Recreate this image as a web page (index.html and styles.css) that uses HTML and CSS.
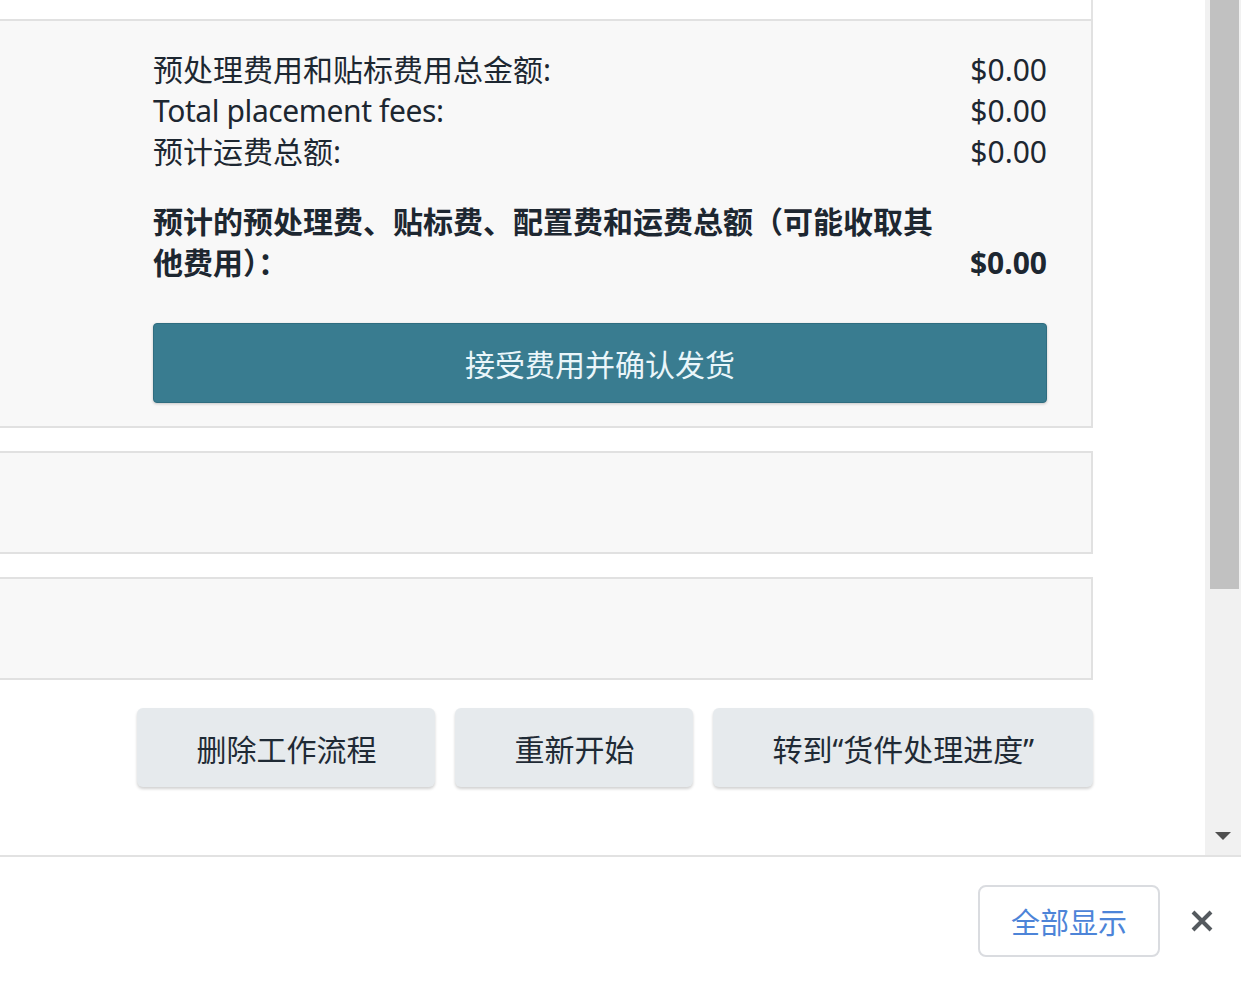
FILE: index.html
```html
<!DOCTYPE html>
<html lang="zh-CN">
<head>
	<meta charset="UTF-8">
	<meta name="viewport" content="width=device-width, initial-scale=1.0">
	<title>确认发货</title>
	<link rel="stylesheet" href="styles.css">
</head>
<body>
	<div class="window">
		<div class="viewport">
			<div class="page">
				<div class="top-strip"></div>

				<div class="panel fees">
					<div class="fee-row">
						<span class="fee-label">预处理费用和贴标费用总金额:</span>
						<span class="fee-value">$0.00</span>
					</div>
					<div class="fee-row">
						<span class="fee-label latin">Total placement fees:</span>
						<span class="fee-value">$0.00</span>
					</div>
					<div class="fee-row">
						<span class="fee-label">预计运费总额:</span>
						<span class="fee-value">$0.00</span>
					</div>
					<div class="fee-row total">
						<span class="fee-label">预计的预处理费、贴标费、配置费和运费总额（可能收取其他费用）：</span>
						<span class="fee-value">$0.00</span>
					</div>
					<button class="btn-primary" type="button">接受费用并确认发货</button>
				</div>

				<div class="panel empty"></div>
				<div class="panel empty"></div>

				<div class="actions">
					<button class="btn-secondary" type="button">删除工作流程</button>
					<button class="btn-secondary" type="button">重新开始</button>
					<button class="btn-secondary" type="button">转到“货件处理进度”</button>
				</div>
			</div>

			<div class="scrollbar">
				<div class="scroll-thumb"></div>
				<div class="scroll-arrow"></div>
			</div>
		</div>

		<div class="shelf">
			<button class="btn-show-all" type="button">全部显示</button>
			<button class="btn-close" type="button" aria-label="关闭">
				<svg width="24" height="24" viewBox="0 0 24 24">
					<path d="M3 3 L21 21 M21 3 L3 21" stroke="#555a5f" stroke-width="4" fill="none"/>
				</svg>
			</button>
		</div>
	</div>
</body>
</html>
```

FILE: styles.css
```css
body
{
	margin: 0;
	font-family: "Noto Sans", "Noto Sans CJK SC", sans-serif;
	color: #1d2731;
	background-color: #ffffff;
	overflow: hidden;
}

.window
{
	display: flex;
	flex-direction: column;
	width: 1241px;
	height: 985px;
}

.viewport
{
	display: flex;
	height: 857px;
	border-bottom: 2px solid #e2e2e2;
	box-sizing: border-box;
}

.page
{
	flex: 1;
	padding-right: 112px;
	overflow: hidden;
}

.top-strip
{
	height: 19px;
	border-right: 2px solid #e3e3e3;
}

.panel
{
	background-color: #f8f8f8;
	border: 2px solid #e1e1e1;
	border-left: 0;
}

.fees
{
	padding: 28px 44px 23px 153px;
}

.fee-row
{
	display: flex;
	justify-content: space-between;
	align-items: flex-end;
	font-size: 30px;
	line-height: 41px;
}

.fee-label
{
	width: 790px;
}

.fee-label.latin
{
	letter-spacing: -0.4px;
}

.fee-row.total
{
	margin-top: 29px;
	font-weight: 700;
}

.btn-primary
{
	display: block;
	width: 100%;
	height: 80px;
	margin-top: 40px;
	font-family: "Noto Sans", "Noto Sans CJK SC", sans-serif;
	font-size: 30px;
	color: #eaf6fa;
	background-color: #397c90;
	border: 1px solid #2f6d80;
	border-radius: 4px;
	box-shadow: 0 1px 3px rgba(0, 0, 0, 0.2);
	cursor: pointer;
}

.empty
{
	height: 99px;
	margin-top: 23px;
}

.actions
{
	display: flex;
	justify-content: flex-end;
	gap: 20px;
	margin-top: 28px;
}

.btn-secondary
{
	height: 79px;
	padding: 0 59px;
	font-family: "Noto Sans", "Noto Sans CJK SC", sans-serif;
	font-size: 30px;
	color: #1f2a35;
	background-color: #e6eaed;
	border: 0;
	border-radius: 6px;
	box-shadow: 0 2px 3px rgba(0, 0, 0, 0.18);
	cursor: pointer;
}

.scrollbar
{
	display: flex;
	flex-direction: column;
	align-items: center;
	width: 36px;
	background-color: #f1f1f1;
}

.scroll-thumb
{
	width: 29px;
	height: 589px;
	margin-left: 2px;
	background-color: #c1c1c1;
}

.scroll-arrow
{
	margin-top: auto;
	margin-bottom: 15px;
	width: 0;
	height: 0;
	border-left: 8px solid transparent;
	border-right: 8px solid transparent;
	border-top: 8px solid #505050;
}

.shelf
{
	flex: 1;
	display: flex;
	justify-content: flex-end;
	align-items: center;
	gap: 30px;
	padding: 0 27px 0 0;
}

.btn-show-all
{
	width: 182px;
	height: 72px;
	font-family: "Noto Sans", "Noto Sans CJK SC", sans-serif;
	font-size: 29px;
	color: #4d84d8;
	background-color: #ffffff;
	border: 2px solid #dadce0;
	border-radius: 8px;
	cursor: pointer;
}

.btn-close
{
	display: flex;
	padding: 0;
	background: none;
	border: 0;
	cursor: pointer;
}
```
